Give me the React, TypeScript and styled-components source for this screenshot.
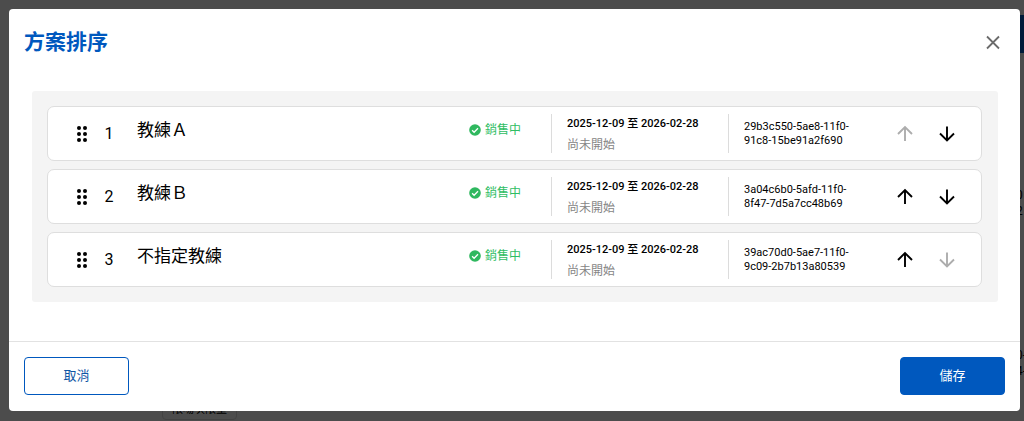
import React, { useState } from "react";
import styled, { createGlobalStyle } from "styled-components";

const GlobalStyle = createGlobalStyle`
  *, *::before, *::after { box-sizing: border-box; }
  body {
    margin: 0;
    background: #ffffff;
    color: #000000;
    font-family: Roboto, "Noto Sans CJK TC", sans-serif;
  }
  button { font: inherit; cursor: pointer; }
`;

const Page = styled.main`
  display: flex;
  flex-direction: column;
  align-items: flex-end;
  height: 100vh;
  overflow: hidden;
  padding-top: 15px;
`;

const PageAction = styled.div`
  width: 24px;
  height: 38px;
  flex: none;
  background: #0058c0;
`;

const PageRecord = styled.div<{ $gap: number }>`
  width: 8px;
  flex: none;
  margin-top: ${(p) => p.$gap}px;
  font-size: 12px;
  line-height: 16px;
  white-space: nowrap;
`;

const PageTag = styled.div`
  align-self: flex-start;
  flex: none;
  margin: 21px 0 0 162px;
  padding: 0 9px;
  border: 1px solid #dddddd;
  border-radius: 4px;
  font-size: 11px;
  line-height: 18px;
`;

const Backdrop = styled.div`
  position: fixed;
  inset: 0;
  padding: 9px 4px 10px 9px;
  background: rgba(0, 0, 0, 0.7);
`;

const Dialog = styled.section`
  background: #ffffff;
  border-radius: 4px;
`;

const Header = styled.header`
  display: flex;
  align-items: center;
  justify-content: space-between;
  padding: 19px 15px;
`;

const Title = styled.h2`
  margin: 0;
  color: #0058be;
  font-size: 21px;
  line-height: 28px;
  font-weight: 700;
`;

const IconButton = styled.button`
  display: flex;
  align-items: center;
  justify-content: center;
  width: 24px;
  height: 24px;
  padding: 0;
  border: 0;
  background: none;
  color: #000000;
  &:disabled { color: #adadad; cursor: default; }
`;

const CloseButton = styled(IconButton)`
  color: #6b6b6b;
`;

const Body = styled.div`
  padding: 16px 22px 39px 23px;
`;

const List = styled.ol`
  display: flex;
  flex-direction: column;
  gap: 8px;
  margin: 0;
  padding: 15px 16px 15px 15px;
  list-style: none;
  background: #f4f4f4;
  border-radius: 3px;
`;

const Row = styled.li`
  display: grid;
  grid-template-columns: 24px 30px 1fr 82px 177px 165px auto;
  align-items: center;
  padding: 7px 22px;
  border: 1px solid #dedede;
  border-radius: 7px;
  background: #ffffff;
`;

const Order = styled.span`
  font-size: 16px;
  line-height: 20px;
  text-align: center;
`;

const Name = styled.span`
  padding: 0 12px 8px 13px;
  font-size: 17px;
  line-height: 24px;
`;

const Status = styled.span`
  display: flex;
  align-items: center;
  gap: 4px;
  padding-bottom: 8px;
  color: #2fbd63;
  font-size: 12px;
  line-height: 16px;
`;

const Period = styled.div`
  display: flex;
  flex-direction: column;
  justify-content: center;
  gap: 5px;
  height: 39px;
  padding: 2px 0 0 15px;
  border-left: 1px solid #dcdcdc;
  line-height: 16px;
`;

const Dates = styled.span`
  font-size: 11px;
  font-weight: 500;
`;

const Note = styled.span`
  color: #858585;
  font-size: 12px;
`;

const Identifier = styled.div`
  display: flex;
  align-items: center;
  height: 39px;
  padding: 0 32px 0 15px;
  border-left: 1px solid #dcdcdc;
  font-size: 11px;
  line-height: 14px;
`;

const Moves = styled.div`
  display: flex;
  gap: 18px;
`;

const Footer = styled.footer`
  display: flex;
  justify-content: space-between;
  padding: 15px 15px 16px;
  border-top: 1px solid #e2e2e2;
`;

const Button = styled.button<{ $primary?: boolean }>`
  width: 105px;
  height: 38px;
  padding: 0;
  border: 1px solid #0058be;
  border-radius: 4px;
  background: ${(p) => (p.$primary ? "#0058be" : "#ffffff")};
  color: ${(p) => (p.$primary ? "#ffffff" : "#0f56a5")};
  font-size: 13px;
  line-height: 20px;
`;

const DragIcon = () => (
  <svg width="24" height="24" viewBox="0 0 24 24" fill="#000" aria-hidden="true">
    {[6, 12, 18].map((y) => (
      <g key={y}>
        <circle cx="9" cy={y} r="2" />
        <circle cx="15" cy={y} r="2" />
      </g>
    ))}
  </svg>
);

const CheckIcon = () => (
  <svg width="12" height="12" viewBox="0 0 12 12" aria-hidden="true">
    <circle cx="6" cy="6" r="5.8" fill="#2fb85f" />
    <path d="M3.1 6.2 5.1 8.2 9 4.2" fill="none" stroke="#fff" strokeWidth="1.3" />
  </svg>
);

const ArrowIcon = ({ down = false }: { down?: boolean }) => (
  <svg width="24" height="24" viewBox="0 0 24 24" fill="none" stroke="currentColor" strokeWidth="1.9" aria-hidden="true">
    <path d={down ? "M12 4.500v14M5 11.500l7 7 7-7" : "M12 19V5M5 12l7-7 7 7"} />
  </svg>
);

const CloseIcon = () => (
  <svg width="24" height="24" viewBox="0 0 24 24" fill="none" stroke="currentColor" strokeWidth="1.8" aria-hidden="true">
    <path d="m6 6.500 12 12M18 6.500 6 18.500" />
  </svg>
);

interface Plan {
  id: string;
  name: string;
}

const initialPlans: Plan[] = [
  { id: "29b3c550-5ae8-11f0-91c8-15be91a2f690", name: "教練Ａ" },
  { id: "3a04c6b0-5afd-11f0-8f47-7d5a7cc48b69", name: "教練Ｂ" },
  { id: "39ac70d0-5ae7-11f0-9c09-2b7b13a80539", name: "不指定教練" },
];

export default function App() {
  const [plans, setPlans] = useState(initialPlans);

  const move = (from: number, to: number) => {
    const next = [...plans];
    [next[from], next[to]] = [next[to], next[from]];
    setPlans(next);
  };

  return (
    <>
      <GlobalStyle />
      <Page aria-hidden="true">
        <PageAction />
        <PageRecord $gap={134}>0<br />2</PageRecord>
        <PageRecord $gap={128}>0-<br />4-</PageRecord>
        <PageTag>限場次限量</PageTag>
      </Page>
      <Backdrop>
        <Dialog role="dialog" aria-modal="true" aria-labelledby="sort-title">
          <Header>
            <Title id="sort-title">方案排序</Title>
            <CloseButton type="button" aria-label="關閉">
              <CloseIcon />
            </CloseButton>
          </Header>
          <Body>
            <List>
              {plans.map((plan, i) => (
                <Row key={plan.id}>
                  <DragIcon />
                  <Order>{i + 1}</Order>
                  <Name>{plan.name}</Name>
                  <Status>
                    <CheckIcon />
                    銷售中
                  </Status>
                  <Period>
                    <Dates>2025-12-09 至 2026-02-28</Dates>
                    <Note>尚未開始</Note>
                  </Period>
                  <Identifier>{plan.id}</Identifier>
                  <Moves>
                    <IconButton type="button" aria-label="上移" disabled={i === 0} onClick={() => move(i, i - 1)}>
                      <ArrowIcon />
                    </IconButton>
                    <IconButton
                      type="button"
                      aria-label="下移"
                      disabled={i === plans.length - 1}
                      onClick={() => move(i, i + 1)}
                    >
                      <ArrowIcon down />
                    </IconButton>
                  </Moves>
                </Row>
              ))}
            </List>
          </Body>
          <Footer>
            <Button type="button">取消</Button>
            <Button type="button" $primary>儲存</Button>
          </Footer>
        </Dialog>
      </Backdrop>
    </>
  );
}
